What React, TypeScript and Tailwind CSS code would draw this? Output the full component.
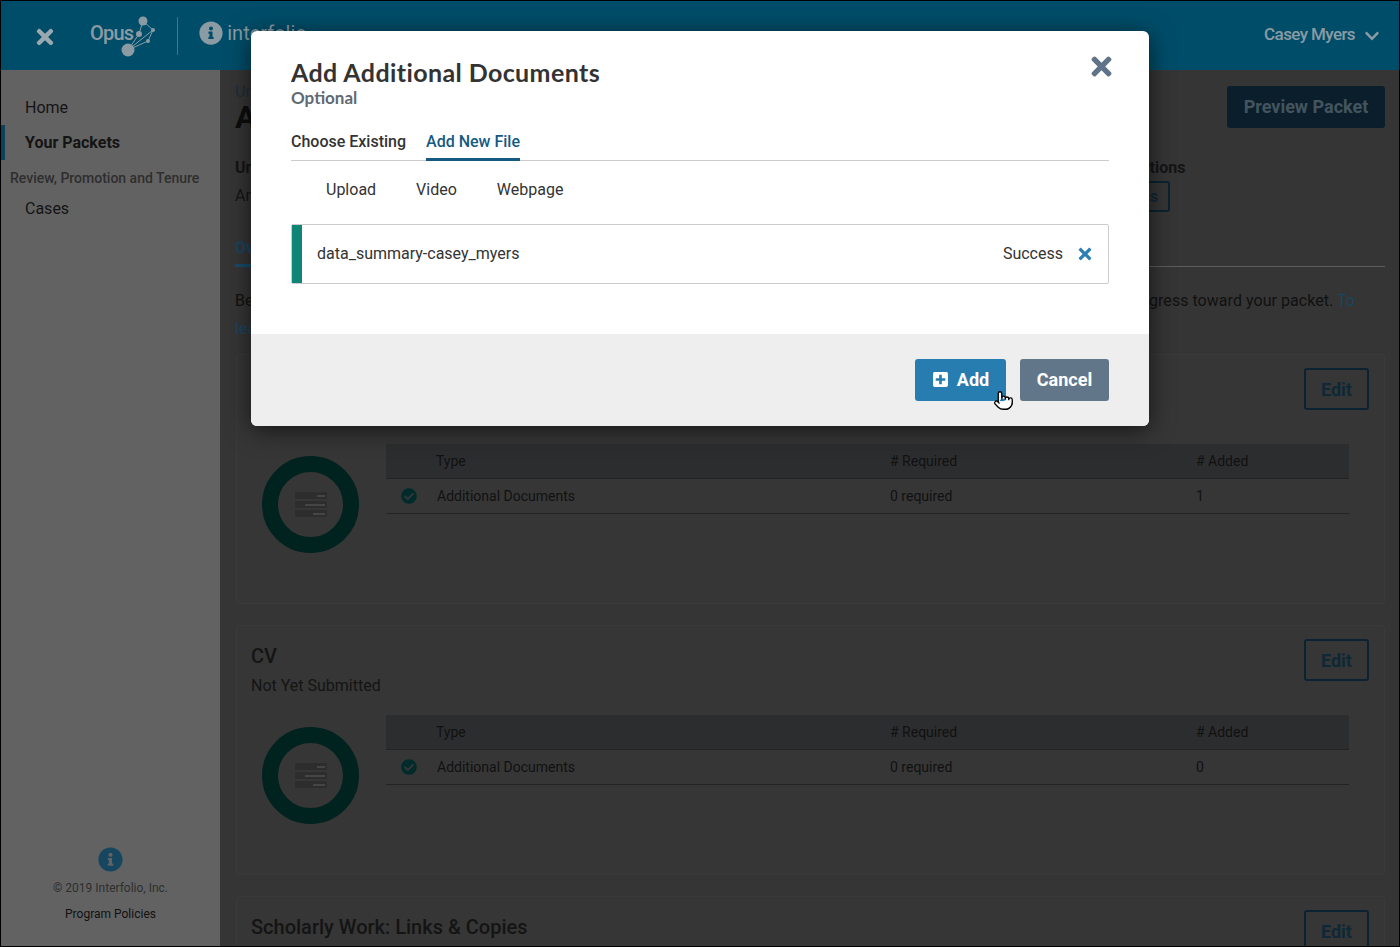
import React from "react";
import { Pointer } from "lucide-react";
import { FaCheckCircle, FaChevronDown, FaInfoCircle, FaPlusSquare, FaTimes } from "react-icons/fa";

const Donut = () => (
  <div className="w-[97px] h-[97px] shrink-0 rounded-full border-[16px] border-[#012320] flex flex-col items-center justify-center gap-[2px] ml-[11px] mt-[12px]">
    <div className="w-[32px] h-[7px] bg-[#2d2d2d] rounded-[1px] flex justify-end pr-[2px] items-center">
      <div className="w-[8px] h-[2px] bg-[#454545]" />
    </div>
    <div className="w-[32px] h-[7px] bg-[#2d2d2d] rounded-[1px] flex justify-end pr-[2px] items-center">
      <div className="w-[20px] h-[2px] bg-[#454545]" />
    </div>
    <div className="w-[32px] h-[7px] bg-[#2d2d2d] rounded-[1px] flex justify-end pr-[2px] items-center">
      <div className="w-[12px] h-[2px] bg-[#454545]" />
    </div>
  </div>
);

interface PacketCardProps {
  title: string;
  status: string;
  added: number;
}

const PacketCard: React.FC<PacketCardProps> = ({ title, status, added }) => (
  <div className="h-[250px] shrink-0 bg-[#363636] border border-[#3a3a3a] rounded-[3px] px-[14px] pt-[13px]">
    <div className="flex justify-between h-[76px]">
      <div className="pt-[3px]">
        <div className="text-[20px] leading-[28px] font-medium text-[#141414]">{title}</div>
        <div className="text-[16px] leading-[24px] mt-[4px] text-[#141414]">{status}</div>
      </div>
      <button className="w-[65px] h-[42px] mr-[1px] border-2 border-[#0b2330] rounded-[3px] text-[18px] font-bold text-[#0f2836]">
        Edit
      </button>
    </div>
    <div className="flex">
      <Donut />
      <div className="w-[963px] ml-[27px]">
        <div className="flex h-[35px] items-center bg-[#2c2d2e] border-b border-[#232323] text-[14px] text-[#111]">
          <div className="w-[50px]" />
          <div className="w-[454px]">Type</div>
          <div className="w-[306px]"># Required</div>
          <div># Added</div>
        </div>
        <div className="flex h-[35px] items-center border-b border-[#232323] text-[14px] text-[#111]">
          <div className="w-[51px] pl-[15px]">
            <FaCheckCircle className="text-[#012b2b] text-[16px]" />
          </div>
          <div className="w-[453px]">Additional Documents</div>
          <div className="w-[306px]">0 required</div>
          <div>{added}</div>
        </div>
      </div>
    </div>
  </div>
);

const OpusLogo = () => (
  <svg width="38" height="42" viewBox="0 0 38 42" className="ml-[-13px] mt-[1px]">
    <g stroke="#8b9ba3" strokeWidth="1" fill="none">
      <path d="M23 6 L33 15 L28 26 L8 35" />
      <path d="M23 6 L19 19 L8 35" />
      <path d="M8 35 L33 15" />
    </g>
    <g fill="#8b9ba3">
      <circle cx="23" cy="6" r="4.5" />
      <circle cx="33" cy="15" r="2" />
      <circle cx="19" cy="19" r="3" />
      <circle cx="28" cy="26" r="2" />
      <circle cx="8" cy="35" r="6.5" />
    </g>
  </svg>
);

export default function App() {
  return (
    <div className="relative w-[1400px] h-[947px] overflow-hidden border border-black bg-[#353535] font-['Roboto',sans-serif] text-[#141414]">
      {/* Top bar */}
      <header className="h-[69px] bg-[#004d69] flex items-center text-[#8b9ba3]">
        <FaTimes className="ml-[32px] text-[24px] mt-[2px] text-[#9aa9b0]" />
        <div className="ml-[33px] text-[20px] font-medium tracking-[-0.8px] text-[#8b9ba3] mt-[-5px]">Opus</div>
        <OpusLogo />
        <div className="w-px h-[38px] bg-[#3f7489] ml-[19px]" />
        <FaInfoCircle className="ml-[21px] text-[24px] text-[#8b9ba3] mt-[-5px]" />
        <div className="ml-[4px] text-[20px] text-[#8b9ba3] mt-[-5px]">interfolio</div>
        <div className="ml-auto mr-[19px] flex items-center gap-[9px] mt-[-2px] text-[17px] font-medium tracking-[-0.6px]">
          Casey Myers
          <FaChevronDown className="text-[16px] mt-[2px]" />
        </div>
      </header>

      <div className="flex h-[876px]">
        {/* Sidebar */}
        <aside className="w-[219px] shrink-0 bg-[#626262] flex flex-col">
          <nav className="pt-[20px] text-[16px]">
            <div className="h-[35px] flex items-center pl-[24px]">Home</div>
            <div className="h-[35px] flex items-center pl-[20px] border-l-[4px] border-[#10405a] font-bold">Your Packets</div>
            <div className="mt-[9px] pl-[9px] text-[14px] leading-[18px] font-medium text-[#2e2e2e]">Review, Promotion and Tenure</div>
            <div className="mt-[4px] h-[35px] flex items-center pl-[24px]">Cases</div>
          </nav>
          <div className="mt-auto pb-[23px] flex flex-col items-center text-[12px]">
            <FaInfoCircle className="text-[25px] text-[#174660]" />
            <div className="mt-[7px] text-[#2e2e2e]">© 2019 Interfolio, Inc.</div>
            <div className="mt-[8px] text-[#111]">Program Policies</div>
          </div>
        </aside>

        {/* Packet page */}
        <main className="flex-1 min-w-0 flex flex-col pl-[15px] pr-[14px] pt-[16px]">
          <div className="flex justify-between h-[42px]">
            <div>
              <div className="text-[16px] leading-[10px] mt-[1px] text-[#1c2f3a]">University</div>
              <div className="text-[32px] leading-[36px] mt-[2px] font-bold text-[#0d0d0d]">Additional</div>
            </div>
            <button className="w-[158px] h-[42px] pb-[1px] rounded-[3px] bg-[#0a1f2b] text-[18px] font-bold text-[#43545e]">Preview Packet</button>
          </div>
          <div className="flex justify-between mt-[30px]">
            <div>
              <div className="text-[16px] leading-[20px] font-bold">Unit</div>
              <div className="text-[16px] leading-[20px] mt-[8px]">Anthropology</div>
            </div>
            <div className="mr-[202px] w-[107px] flex flex-col">
              <div className="text-[16px] leading-[20px] font-bold whitespace-nowrap">Packet Options</div>
              <button className="mt-[3px] w-[94px] h-[31px] pr-[10px] text-right border-2 border-[#0b2330] rounded-[3px] text-[16px] font-bold text-[#0f2836]">Sections</button>
            </div>
          </div>
          <div className="mt-[27px] h-[28px] border-b border-[#5c5c5c] flex">
            <div className="h-[28px] border-b-[3px] border-[#164c6c] text-[16px] font-bold text-[#184660] leading-[18px]">Overview</div>
          </div>
          <p className="mt-[20px] mb-[11px] text-[16px] leading-[28px] tracking-[0.04px] text-[#111]">
            Below are the sections of your packet and what each one requires. Add all materials to any section at any time and save your progress toward your packet.{" "}
            <span className="text-[#184660]">To learn more about packets, see our guide.</span>
          </p>
          <div className="flex flex-col gap-[21px] ml-[1px]">
            <PacketCard title="Additional Documents" status="Not Yet Submitted" added={1} />
            <PacketCard title="CV" status="Not Yet Submitted" added={0} />
            <PacketCard title="Scholarly Work: Links & Copies" status="Not Yet Submitted" added={0} />
          </div>
        </main>
      </div>

      {/* Modal */}
      <div className="absolute left-[250px] top-[30px] w-[898px] h-[395px] bg-white rounded-[6px] overflow-hidden shadow-[0_4px_24px_rgba(0,0,0,0.6)] flex flex-col">
        <div className="flex-1 px-[40px] pt-[27px]">
          <div className="flex justify-between">
            <div>
              <h2 className="font-['Lato',sans-serif] text-[25px] leading-[28px] font-bold text-[#333] tracking-[0.4px]">Add Additional Documents</h2>
              <div className="font-['Lato',sans-serif] text-[17px] leading-[22px] mt-[1px] font-bold text-[#5f6a72]">Optional</div>
            </div>
            <FaTimes className="text-[#5f7488] text-[29px] mt-[-6px] mr-[-7px]" />
          </div>
          <div className="flex gap-[20px] mt-[21px] border-b border-[#ccc] h-[31px] text-[16px] font-medium">
            <div className="h-[31px] leading-[24px] text-[#333]">Choose Existing</div>
            <div className="h-[31px] leading-[24px] text-[#155a83] border-b-[3px] border-[#155a83]">Add New File</div>
          </div>
          <div className="flex gap-[40px] pl-[35px] mt-[17px] text-[16px] leading-[24px] text-[#333]">
            <div>Upload</div>
            <div>Video</div>
            <div>Webpage</div>
          </div>
          <div className="mt-[22px] h-[60px] border border-[#ccc] rounded-[2px] flex items-center text-[16px] text-[#333]">
            <div className="w-[10px] h-full bg-[#0e8577] mr-[15px]" />
            <div>data_summary-casey_myers</div>
            <div className="ml-auto">Success</div>
            <FaTimes className="ml-[13px] mr-[14px] text-[#2a7fb5] text-[18px]" />
          </div>
        </div>
        <div className="h-[92px] bg-[#eeeeee] flex justify-end items-start pt-[25px] px-[40px] gap-[14px]">
          <button className="relative w-[91px] h-[42px] pb-[1px] rounded-[3px] bg-[#277cb0] text-white text-[18px] font-bold flex items-center justify-center gap-[8px]">
            <FaPlusSquare className="text-[17px]" />
            Add
            <Pointer size={21} className="absolute left-[78px] top-[31px] fill-white text-black" strokeWidth={1.5} />
          </button>
          <button className="w-[89px] h-[42px] pb-[1px] rounded-[3px] bg-[#62768a] text-white text-[18px] font-bold">Cancel</button>
        </div>
      </div>
    </div>
  );
}
